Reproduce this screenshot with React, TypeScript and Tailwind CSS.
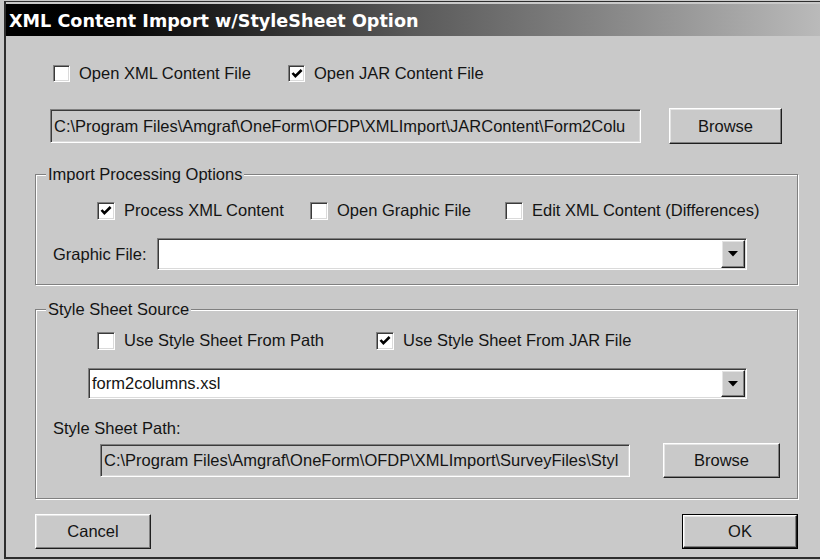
import { ReactNode } from "react";

// classic 3D edges
const sunken =
  "border border-t-[#808080] border-l-[#808080] border-b-white border-r-white shadow-[inset_1px_1px_0_#3a3a3a,inset_-1px_-1px_0_#dadada]";
const raised =
  "border border-t-white border-l-white border-b-[#1e1e1e] border-r-[#1e1e1e] shadow-[inset_-1px_-1px_0_#808080,inset_1px_1px_0_#e4e4e4]";
const etched =
  "border border-[#808080] shadow-[1px_1px_0_#fff,inset_1px_1px_0_#fff]";

function Check({
  label,
  checked = false,
  box = "w-[18px] h-[18px]",
  className = "",
}: {
  label: string;
  checked?: boolean;
  box?: string;
  className?: string;
}) {
  return (
    <div className={"flex items-center shrink-0 " + className}>
      <span
        className={
          "bg-white flex items-center justify-center shrink-0 " + box + " " + sunken
        }
      >
        {checked && (
          <svg width="12" height="11" viewBox="0 0 12 11">
            <path
              d="M1.5 5 L4.4 8.2 L10.6 2"
              fill="none"
              stroke="#000"
              strokeWidth="2.6"
            />
          </svg>
        )}
      </span>
      <span className="ml-[9px] whitespace-nowrap leading-[19px]">{label}</span>
    </div>
  );
}

function Button({
  children,
  className = "",
}: {
  children: ReactNode;
  className?: string;
}) {
  return (
    <button
      className={
        "bg-[#c9c9c9] flex items-center justify-center leading-[19px] shrink-0 " +
        raised +
        " " +
        className
      }
    >
      {children}
    </button>
  );
}

function Combo({ value = "", className = "" }: { value?: string; className?: string }) {
  return (
    <div className={"flex bg-white p-[1px] shrink-0 " + sunken + " " + className}>
      <span className="flex-1 pl-[2px] self-center whitespace-nowrap leading-[19px]">
        {value}
      </span>
      <span
        className={"w-[24px] bg-[#c9c9c9] flex items-center justify-center " + raised}
      >
        <svg width="10" height="6" viewBox="0 0 10 6">
          <path d="M0 0 H10 L5 5.5 Z" fill="#000" />
        </svg>
      </span>
    </div>
  );
}

function PathField({ value, className = "" }: { value: string; className?: string }) {
  return (
    <div
      className={
        "bg-[#c9c9c9] flex items-center overflow-hidden pl-[3px] shrink-0 " +
        sunken +
        " " +
        className
      }
    >
      <span className="whitespace-nowrap leading-[19px]">{value}</span>
    </div>
  );
}

function Group({
  title,
  children,
  className = "",
}: {
  title: string;
  children: ReactNode;
  className?: string;
}) {
  return (
    <fieldset className={"w-[763px] " + etched + " " + className}>
      <legend className="ml-[10px] px-[2px] bg-[#c9c9c9] leading-[19px]">{title}</legend>
      {children}
    </fieldset>
  );
}

export default function App() {
  return (
    <div className="w-[820px] h-[560px] bg-[#c9c9c9] pt-[1px] pl-[4px] overflow-hidden font-['Liberation_Sans',Arial,sans-serif] text-[16.5px] text-[#141414]">
      <div className="h-[558px] border-t border-l-2 border-b-2 border-[#2e2e2e] pt-[2px]">
        <div className="h-[32px] pl-[3px] pt-[7px] bg-linear-to-r from-black via-[#5a5a5a] to-[#bababa] font-['DejaVu_Sans',Verdana,sans-serif] font-bold text-[17.6px] leading-[21px] text-white whitespace-nowrap">
          XML Content Import w/StyleSheet Option
        </div>

        <div className="pl-[29px]">
          <div className="mt-[28px] flex pl-[18px]">
            <Check label="Open XML Content File" box="w-[17px] h-[17px]" className="w-[235px]" />
            <Check label="Open JAR Content File" box="w-[17px] h-[17px]" checked />
          </div>

          <div className="mt-[25px] flex items-center h-[36px] pl-[15px]">
            <PathField
              className="w-[591px] h-[34px]"
              value={"C:\\Program Files\\Amgraf\\OneForm\\OFDP\\XMLImport\\JARContent\\Form2Colu"}
            />
            <Button className="ml-[28px] w-[113px] h-[36px]">Browse</Button>
          </div>

          <Group title="Import Processing Options" className="mt-[21px] pb-[14px]">
            <div className="pt-[17px] pl-[61px] flex">
              <Check label="Process XML Content" checked className="w-[213px]" />
              <Check label="Open Graphic File" className="w-[195px]" />
              <Check label="Edit XML Content (Differences)" />
            </div>
            <div className="mt-[18px] pl-[17px] flex items-center">
              <span className="w-[104px] leading-[19px]">Graphic File:</span>
              <Combo className="w-[590px] h-[32px]" />
            </div>
          </Group>

          <Group title="Style Sheet Source" className="mt-[15px] pb-[20px]">
            <div className="pt-[12px] pl-[61px] flex">
              <Check label="Use Style Sheet From Path" className="w-[279px]" />
              <Check label="Use Style Sheet From JAR File" checked />
            </div>
            <Combo value="form2columns.xsl" className="mt-[18px] ml-[52px] w-[659px] h-[31px]" />
            <div className="mt-[20px] pl-[17px] leading-[19px]">Style Sheet Path:</div>
            <div className="mt-[5px] pl-[64px] flex items-center h-[35px]">
              <PathField
                className="w-[530px] h-[33px]"
                value={"C:\\Program Files\\Amgraf\\OneForm\\OFDP\\XMLImport\\SurveyFiles\\Styl"}
              />
              <Button className="ml-[33px] w-[117px] h-[35px]">Browse</Button>
            </div>
          </Group>

          <div className="mt-[15px] w-[763px] flex justify-between">
            <Button className="w-[116px] h-[35px]">Cancel</Button>
            <div className="border border-black">
              <Button className="w-[114px] h-[33px]">OK</Button>
            </div>
          </div>
        </div>
      </div>
    </div>
  );
}
